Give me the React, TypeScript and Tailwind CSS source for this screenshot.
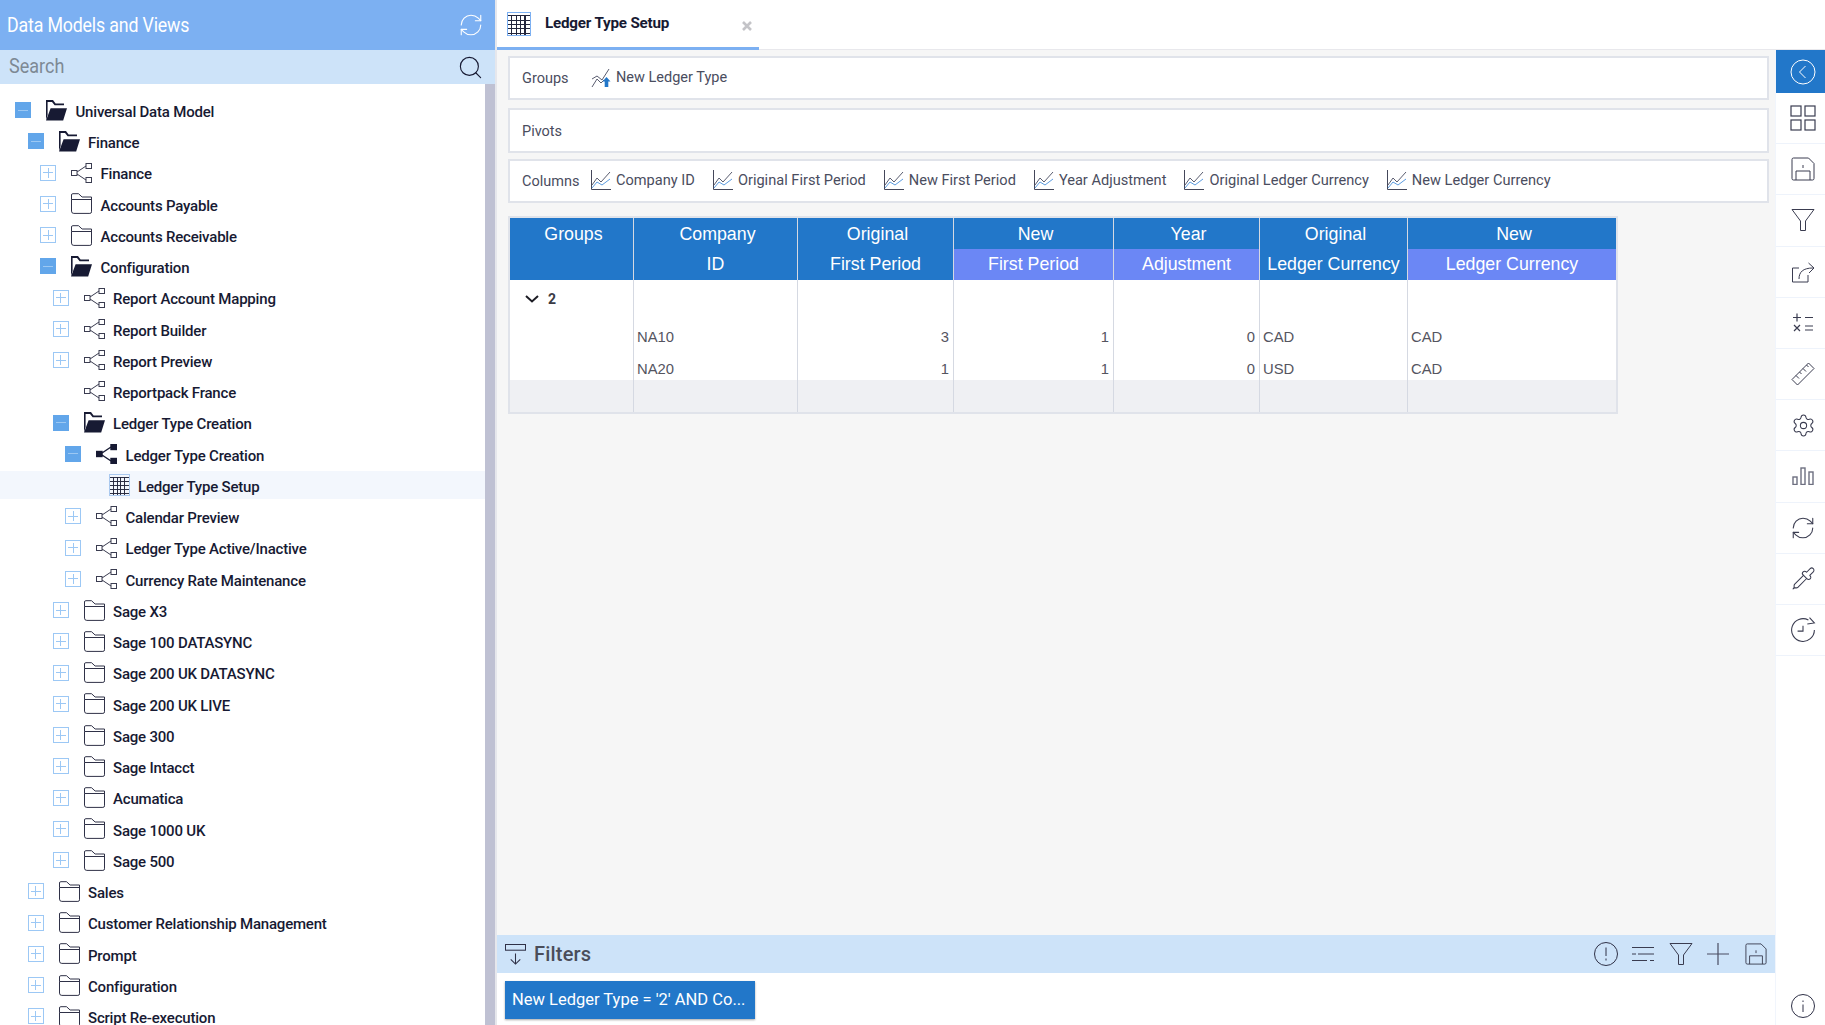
import { Pipette, RefreshCw, Search, Settings } from 'lucide-react'

type Kind = 'folder' | 'open' | 'model' | 'modelFilled' | 'table'
type Box = 'plus' | 'minus' | null

const treeRows: { depth: number; label: string; kind: Kind; box: Box; selected?: boolean }[] = [
  { depth: 0, label: 'Universal Data Model', kind: 'open', box: 'minus' },
  { depth: 1, label: 'Finance', kind: 'open', box: 'minus' },
  { depth: 2, label: 'Finance', kind: 'model', box: 'plus' },
  { depth: 2, label: 'Accounts Payable', kind: 'folder', box: 'plus' },
  { depth: 2, label: 'Accounts Receivable', kind: 'folder', box: 'plus' },
  { depth: 2, label: 'Configuration', kind: 'open', box: 'minus' },
  { depth: 3, label: 'Report Account Mapping', kind: 'model', box: 'plus' },
  { depth: 3, label: 'Report Builder', kind: 'model', box: 'plus' },
  { depth: 3, label: 'Report Preview', kind: 'model', box: 'plus' },
  { depth: 3, label: 'Reportpack France', kind: 'model', box: null },
  { depth: 3, label: 'Ledger Type Creation', kind: 'open', box: 'minus' },
  { depth: 4, label: 'Ledger Type Creation', kind: 'modelFilled', box: 'minus' },
  { depth: 5, label: 'Ledger Type Setup', kind: 'table', box: null, selected: true },
  { depth: 4, label: 'Calendar Preview', kind: 'model', box: 'plus' },
  { depth: 4, label: 'Ledger Type Active/Inactive', kind: 'model', box: 'plus' },
  { depth: 4, label: 'Currency Rate Maintenance', kind: 'model', box: 'plus' },
  { depth: 3, label: 'Sage X3', kind: 'folder', box: 'plus' },
  { depth: 3, label: 'Sage 100 DATASYNC', kind: 'folder', box: 'plus' },
  { depth: 3, label: 'Sage 200 UK DATASYNC', kind: 'folder', box: 'plus' },
  { depth: 3, label: 'Sage 200 UK LIVE', kind: 'folder', box: 'plus' },
  { depth: 3, label: 'Sage 300', kind: 'folder', box: 'plus' },
  { depth: 3, label: 'Sage Intacct', kind: 'folder', box: 'plus' },
  { depth: 3, label: 'Acumatica', kind: 'folder', box: 'plus' },
  { depth: 3, label: 'Sage 1000 UK', kind: 'folder', box: 'plus' },
  { depth: 3, label: 'Sage 500', kind: 'folder', box: 'plus' },
  { depth: 1, label: 'Sales', kind: 'folder', box: 'plus' },
  { depth: 1, label: 'Customer Relationship Management', kind: 'folder', box: 'plus' },
  { depth: 1, label: 'Prompt', kind: 'folder', box: 'plus' },
  { depth: 1, label: 'Configuration', kind: 'folder', box: 'plus' },
  { depth: 1, label: 'Script Re-execution', kind: 'folder', box: 'plus' },
]

const gridCols: { top: string; bottom: string; width: string; alt: boolean; cells: string[]; right?: boolean }[] = [
  { top: 'Groups', bottom: '', width: 'w-[124px]', alt: false, cells: ['', ''] },
  { top: 'Company', bottom: 'ID', width: 'w-[164px]', alt: false, cells: ['NA10', 'NA20'] },
  { top: 'Original', bottom: 'First Period', width: 'w-[156px]', alt: false, cells: ['3', '1'], right: true },
  { top: 'New', bottom: 'First Period', width: 'w-[160px]', alt: true, cells: ['1', '1'], right: true },
  { top: 'Year', bottom: 'Adjustment', width: 'w-[146px]', alt: true, cells: ['0', '0'], right: true },
  { top: 'Original', bottom: 'Ledger Currency', width: 'w-[148px]', alt: false, cells: ['CAD', 'USD'] },
  { top: 'New', bottom: 'Ledger Currency', width: 'w-[208px]', alt: true, cells: ['CAD', 'CAD'] },
]

function FolderIcon() {
  return (
    <svg viewBox="0 0 21 21" className="w-[21px] h-[21px]" fill="none" stroke="#2f3147" strokeWidth="1">
      <path d="M.5 6.5V2A1.3 1.3 0 0 1 1.8.7h5.7l3.6 3.3h9.4v14.8a1.6 1.6 0 0 1-1.6 1.6H2.8a2.3 2.3 0 0 1-2.3-2.3V6.5h20" />
    </svg>
  )
}

function OpenFolderIcon() {
  return (
    <svg viewBox="0 0 21 21" className="w-[21px] h-[21px]" fill="#171a33">
      <path d="M0 0h7l2.6 3.4H18v1.8H8.6L6 1.9H1.6V15L0 20z" />
      <path d="M4.6 8.2H21l-3.8 12.4H0z" />
    </svg>
  )
}

function ModelIcon({ filled }: { filled?: boolean }) {
  return (
    <svg viewBox="0 0 21 20" className="w-[21px] h-[20px]" fill={filled ? '#171a33' : '#fff'} stroke={filled ? '#171a33' : '#3a3c50'} strokeWidth={filled ? 1.4 : 1}>
      <path d="M6 9 15 3M6 11l9 6" fill="none" />
      <rect x=".5" y="7.5" width="5.5" height="5" />
      <rect x="15" y=".5" width="5.5" height="5" />
      <rect x="15" y="14.5" width="5.5" height="5" />
    </svg>
  )
}

// grid glyph, drawn on whole pixels so the lines stay dark
function TableIcon({ accent = '#a6c6ee', size = 'w-[22px] h-[22px]' }: { accent?: string; size?: string }) {
  return (
    <svg viewBox="0 0 22 22" className={size} fill="none" stroke="#23263c" strokeWidth="1" shapeRendering="crispEdges">
      <path d="M0 .5h22M.5 0v22M21.5 0v22M0 21.5h22" stroke={accent} />
      {[4, 8, 12, 16].map(s => <path key={s} d={`M${s}.5 3v18`} />)}
      {[3, 7, 11, 15, 19].map(s => <path key={s} d={`M1 ${s}.5h20`} />)}
    </svg>
  )
}

function ChartIcon() {
  return (
    <svg viewBox="0 0 20 20" className="w-[20px] h-[20px] shrink-0" fill="none" strokeWidth="1">
      <path d="M.5 0v19.5H20" stroke="#44475a" />
      <path d="M1 15 6 8l4 4 9-10" stroke="#5a5d70" />
      <path d="M1 18l5-6 5 3 8-6" stroke="#5b9be0" />
    </svg>
  )
}

function ExpandBox({ type }: { type: Box }) {
  if (!type) return <div className="w-4 h-4 shrink-0" />
  if (type === 'minus')
    return (
      <div className="w-4 h-4 shrink-0 bg-[#62a6ea] flex items-center justify-center">
        <div className="w-[10px] h-px bg-[#9cc8f3]" />
      </div>
    )
  return (
    <div className="w-4 h-4 shrink-0 border border-[#9cc8f5] relative flex items-center justify-center">
      <div className="w-[10px] h-px bg-[#9cc8f5]" />
      <div className="absolute w-px h-[10px] bg-[#9cc8f5]" />
    </div>
  )
}

function TreeIcon({ kind }: { kind: Kind }) {
  if (kind === 'folder') return <FolderIcon />
  if (kind === 'open') return <OpenFolderIcon />
  if (kind === 'table') return <TableIcon />
  return <ModelIcon filled={kind === 'modelFilled'} />
}

function Sidebar() {
  return (
    <div className="w-[495px] shrink-0 flex flex-col h-full">
      <div className="h-[50px] bg-[#7cb0f2] flex items-center justify-between pl-[7px] pr-[11px]">
        <span className="inline-block origin-left scale-x-[0.89] text-[20px] text-white tracking-[-0.2px] whitespace-nowrap">Data Models and Views</span>
        <RefreshCw size={26} strokeWidth={1} color="#ffffff" />
      </div>
      <div className="h-[34px] bg-[#cde3f9] flex items-center justify-between pl-[9px] pr-[11px]">
        <span className="inline-block origin-left scale-x-[0.9] mb-[2px] text-[20px] text-[#7d8994]">Search</span>
        <Search size={27} strokeWidth={1} color="#171a33" />
      </div>
      <div className="flex-1 flex min-h-0 overflow-hidden">
        <div className="flex-1 pt-[10.5px]">
          {treeRows.map((r, i) => (
            <div
              key={i}
              className={`flex items-center ${r.selected ? 'h-[28.25px] my-[1.5px] bg-[#f3f7fd]' : 'h-[31.25px]'}`}
              style={{ paddingLeft: 15 + r.depth * 12.5 }}
            >
              <ExpandBox type={r.box} />
              <div className="ml-[15px] w-[21px] shrink-0 flex justify-center">
                <TreeIcon kind={r.kind} />
              </div>
              <span className="ml-[8.5px] pt-[4px] text-[15px] font-[550] text-[#171a33] tracking-[-0.2px] whitespace-nowrap">{r.label}</span>
            </div>
          ))}
        </div>
        <div className="w-[10px] bg-[#bfc1d3]" />
      </div>
    </div>
  )
}

function Panel({ label, children, className }: { label: string; children?: React.ReactNode; className: string }) {
  return (
    <div className={`border-2 border-[#e0e3ea] bg-white flex items-center pl-[12px] ${className}`}>
      <span className="w-[69px] shrink-0 text-[14.5px] text-[#4a4d5e] pt-[2px]">{label}</span>
      {children}
    </div>
  )
}

function Grid() {
  return (
    <div className="mt-[13px] w-[1110px] border-2 border-[#e0e3ea] bg-white flex font-['Liberation_Sans',Arial,sans-serif]">
      {gridCols.map((c, i) => (
        <div key={i} className={`${c.width} shrink-0 flex flex-col ${i < gridCols.length - 1 ? 'border-r border-[#d5d9e2]' : ''}`}>
          <div className="h-[31px] bg-[#2277c9] flex items-center justify-center pl-1 pt-[2px] text-[17.8px] text-white">{c.top}</div>
          <div className={`h-[31px] flex items-center justify-center text-[17.8px] text-white ${c.alt ? 'bg-[#6b87f5]' : 'bg-[#2277c9]'}`}>{c.bottom}</div>
          <div className="h-[38px] flex items-center">
            {i === 0 && (
              <div className="flex items-center pl-[15px]">
                <svg viewBox="0 0 14 8" className="w-[14px] h-[8px]" fill="none" stroke="#1c1c24" strokeWidth="2">
                  <path d="M1 1l6 5.5L13 1" />
                </svg>
                <span className="ml-[9px] text-[14px] font-bold text-[#3b3b44] font-['Roboto',sans-serif]">2</span>
              </div>
            )}
          </div>
          {c.cells.map((v, j) => (
            <div key={j} className={`${j === 0 ? 'h-[34px] pt-[4px]' : 'h-[28px] pt-[6px]'} flex items-center text-[14.8px] text-[#55555f] ${c.right ? 'justify-end pr-[4px]' : 'pl-[3px]'}`}>
              {v}
            </div>
          ))}
          <div className="h-[32px] bg-[#eff0f3]" />
        </div>
      ))}
    </div>
  )
}

function RailButton({ children, active }: { children: React.ReactNode; active?: boolean }) {
  return (
    <div className={`flex items-center justify-center pl-[5px] ${active ? 'h-[43px] bg-[#2277c9]' : 'h-[51.2px] border-b border-[#eef3fb]'}`}>
      {children}
    </div>
  )
}

function Rail() {
  const stroke = '#3a3c50'
  return (
    <div className="w-[50px] shrink-0 bg-white border-l border-[#f1f5fc] flex flex-col">
      <RailButton active>
        <svg viewBox="0 0 26 26" className="w-[26px] h-[26px]" fill="none" stroke="#fff" strokeWidth="1">
          <circle cx="13" cy="13" r="12" />
          <path d="M15.5 7l-6 6 6 6" />
        </svg>
      </RailButton>
      <RailButton>
        <svg viewBox="0 0 26 26" className="w-[26px] h-[26px]" fill="none" stroke={stroke} strokeWidth="1.2">
          <rect x="1" y="1" width="10" height="10" />
          <rect x="15" y="1" width="10" height="10" />
          <rect x="1" y="15" width="10" height="10" />
          <rect x="15" y="15" width="10" height="10" />
        </svg>
      </RailButton>
      <RailButton>
        <SaveIcon />
      </RailButton>
      <RailButton>
        <FunnelIcon />
      </RailButton>
      <RailButton>
        <svg viewBox="0 0 24 24" className="w-[24px] h-[24px]" fill="none" stroke={stroke} strokeWidth="1">
          <path d="M8 8H1.5v14h15.5v-7" />
          <path d="M8 19c0-7 4-11 14-11M17.5 3 23 8l-5 5" />
        </svg>
      </RailButton>
      <RailButton>
        <svg viewBox="0 0 22 22" className="w-[22px] h-[22px]" fill="none" stroke={stroke} strokeWidth="1.2">
          <path d="M1 5.5h8M5 1.5v8M13 5.5h8M2 13l6 6M8 13l-6 6M13 14h8M13 18h8" />
        </svg>
      </RailButton>
      <RailButton>
        <svg viewBox="0 0 24 24" className="w-[24px] h-[24px]" fill="none" stroke={stroke} strokeWidth="1">
          <path d="M1 17.5 17.5 1 23 6.5 6.5 23z" />
          <path d="M5 13.5l3 3M8.5 10l2 2M12 6.5l3 3M15.5 3l2 2" />
        </svg>
      </RailButton>
      <RailButton>
        <Settings size={25} strokeWidth={1} color={stroke} />
      </RailButton>
      <RailButton>
        <svg viewBox="0 0 22 18" className="w-[22px] h-[18px]" fill="#fff" stroke="#6d6f80" strokeWidth="1.4">
          <rect x="1" y="10" width="4" height="7.5" />
          <rect x="9" y="1" width="4" height="16.5" />
          <rect x="17" y="5" width="4" height="12.5" />
        </svg>
      </RailButton>
      <RailButton>
        <RefreshCw size={26} strokeWidth={1} color={stroke} />
      </RailButton>
      <RailButton>
        <Pipette size={25} strokeWidth={1} color={stroke} />
      </RailButton>
      <RailButton>
        <svg viewBox="0 0 24 24" className="w-[26px] h-[26px]" fill="none" stroke={stroke} strokeWidth="1">
          <path d="M22.5 12A10.5 10.5 0 1 1 17 2.8" />
          <path d="M18 0.5 22.5 5.5 16 6.5M12 8v5H7" />
        </svg>
      </RailButton>
      <div className="flex-1 flex items-end justify-center pb-[7px] pl-[5px]">
        <InfoIcon />
      </div>
    </div>
  )
}

function SaveIcon({ small }: { small?: boolean }) {
  return (
    <svg viewBox="0 0 24 24" className={small ? 'w-[22px] h-[22px]' : 'w-[24px] h-[24px]'} fill="none" stroke="#3a3c50" strokeWidth="1">
      <path d="M2.5 1h15L23 6.5v15a1.5 1.5 0 0 1-1.5 1.5h-19A1.5 1.5 0 0 1 1 21.5v-19A1.5 1.5 0 0 1 2.5 1z" />
      <path d="M5 23v-9h14v9M12 8v3" />
    </svg>
  )
}

function FunnelIcon() {
  return (
    <svg viewBox="0 0 24 24" className="w-[24px] h-[24px]" fill="none" stroke="#3a3c50" strokeWidth="1">
      <path d="M1 1.5h22L14.5 13v9.5h-5V13z" />
    </svg>
  )
}

function InfoIcon() {
  return (
    <svg viewBox="0 0 24 24" className="w-[24px] h-[24px]" fill="none" stroke="#2f3147" strokeWidth="1">
      <circle cx="12" cy="12" r="11.5" />
      <path d="M12 10.5V18M12 6.5v1.5" />
    </svg>
  )
}

function FiltersBar() {
  return (
    <div className="h-[38px] bg-[#cde3f9] flex items-center justify-between pl-[8px] pr-[8px]">
      <div className="flex items-center">
        <svg viewBox="0 0 22 22" className="w-[21px] h-[21px]" fill="none" stroke="#2f3147" strokeWidth="1.1">
          <rect x=".5" y=".5" width="21" height="6" />
          <path d="M11 10v11M6 16l5 5 5-5" />
        </svg>
        <span className="ml-[8px] text-[20px] font-medium text-[#4a4d5a] tracking-[0.2px]">Filters</span>
      </div>
      <div className="flex items-center">
        <svg viewBox="0 0 24 24" className="w-[24px] h-[24px] mr-[14px]" fill="none" stroke="#2f3147" strokeWidth="1">
          <circle cx="12" cy="12" r="11.5" />
          <path d="M12 5.5V14M12 16.5v2" />
        </svg>
        <svg viewBox="0 0 22 16" className="w-[22px] h-[16px] mr-[15px]" fill="none" stroke="#3a3c50" strokeWidth="1">
          <path d="M0 1.5h22M0 8h4M6 8h16M0 14.5h15M18 14.5h4" />
        </svg>
        <FunnelIcon />
        <svg viewBox="0 0 22 22" className="w-[22px] h-[22px] ml-[14px] mr-[16px]" fill="none" stroke="#4a4d62" strokeWidth="1.2">
          <path d="M0 11h22M11 0v22" />
        </svg>
        <SaveIcon small />
      </div>
    </div>
  )
}

export default function App() {
  return (
    <div className="w-[1825px] h-[1025px] flex overflow-hidden bg-white font-['Roboto',sans-serif]">
      <Sidebar />
      <div className="flex-1 min-w-0 flex flex-col border-l-2 border-[#e6e7ec]">
        <div className="h-[50px] shrink-0 border-b border-[#e8e8ec] flex">
          <div className="w-[262px] h-[50px] border-b-[3px] border-[#7cb0f2] flex items-center pl-[10px] relative">
            <TableIcon accent="#7cb0f2" size="w-[24px] h-[24px]" />
            <span className="ml-[14px] text-[15.2px] font-bold text-[#171a33] tracking-[-0.2px]">Ledger Type Setup</span>
            <svg viewBox="0 0 10 10" className="absolute left-[245px] top-[21px] w-[10px] h-[10px]" fill="none" stroke="#c4c4c8" strokeWidth="2.6">
              <path d="M1 1l8 8M9 1l-8 8" />
            </svg>
          </div>
        </div>
        <div className="flex-1 min-h-0 flex">
          <div className="flex-1 min-w-0 flex flex-col">
            <div className="flex-1 min-h-0 bg-[#f6f6f6] pl-[11px] pr-[6px] pt-[6px]">
              <Panel label="Groups" className="h-[44px] mb-[8px]">
                <div className="flex items-center">
                  <svg viewBox="0 0 20 20" className="w-[20px] h-[20px] mr-[5px]" fill="none" stroke="#5a5d70" strokeWidth="1">
                    <path d="M1 11l5-3 5 4 7-11M1 19l5-8 4 4 3-3" />
                    <path d="M15.5 9l4 4.5h-2.2V19h-3.6v-5.5h-2.2z" fill="#2277c9" stroke="none" />
                  </svg>
                  <span className="text-[14.5px] text-[#4a4d5e]">New Ledger Type</span>
                </div>
              </Panel>
              <Panel label="Pivots" className="h-[45px] mb-[6px]" />
              <Panel label="Columns" className="h-[44px]">
                <div className="flex items-center gap-[18px] mb-[1px]">
                  {gridCols.slice(1).map(c => (
                    <div key={c.bottom + c.top} className="flex items-center gap-[5px]">
                      <ChartIcon />
                      <span className="text-[14.6px] text-[#4a4d5e] whitespace-nowrap">{c.top} {c.bottom}</span>
                    </div>
                  ))}
                </div>
              </Panel>
              <Grid />
            </div>
            <FiltersBar />
            <div className="h-[52px] shrink-0 bg-white pl-[8px] pt-[8px]">
              <div className="w-[250px] h-[38px] bg-[#2277c9] shadow-[0_1px_2px_rgba(0,0,0,0.35)] flex items-center pl-[7px] pt-[1px] text-[16.5px] text-white whitespace-nowrap">
                New Ledger Type = '2' AND Co...
              </div>
            </div>
          </div>
          <Rail />
        </div>
      </div>
    </div>
  )
}
